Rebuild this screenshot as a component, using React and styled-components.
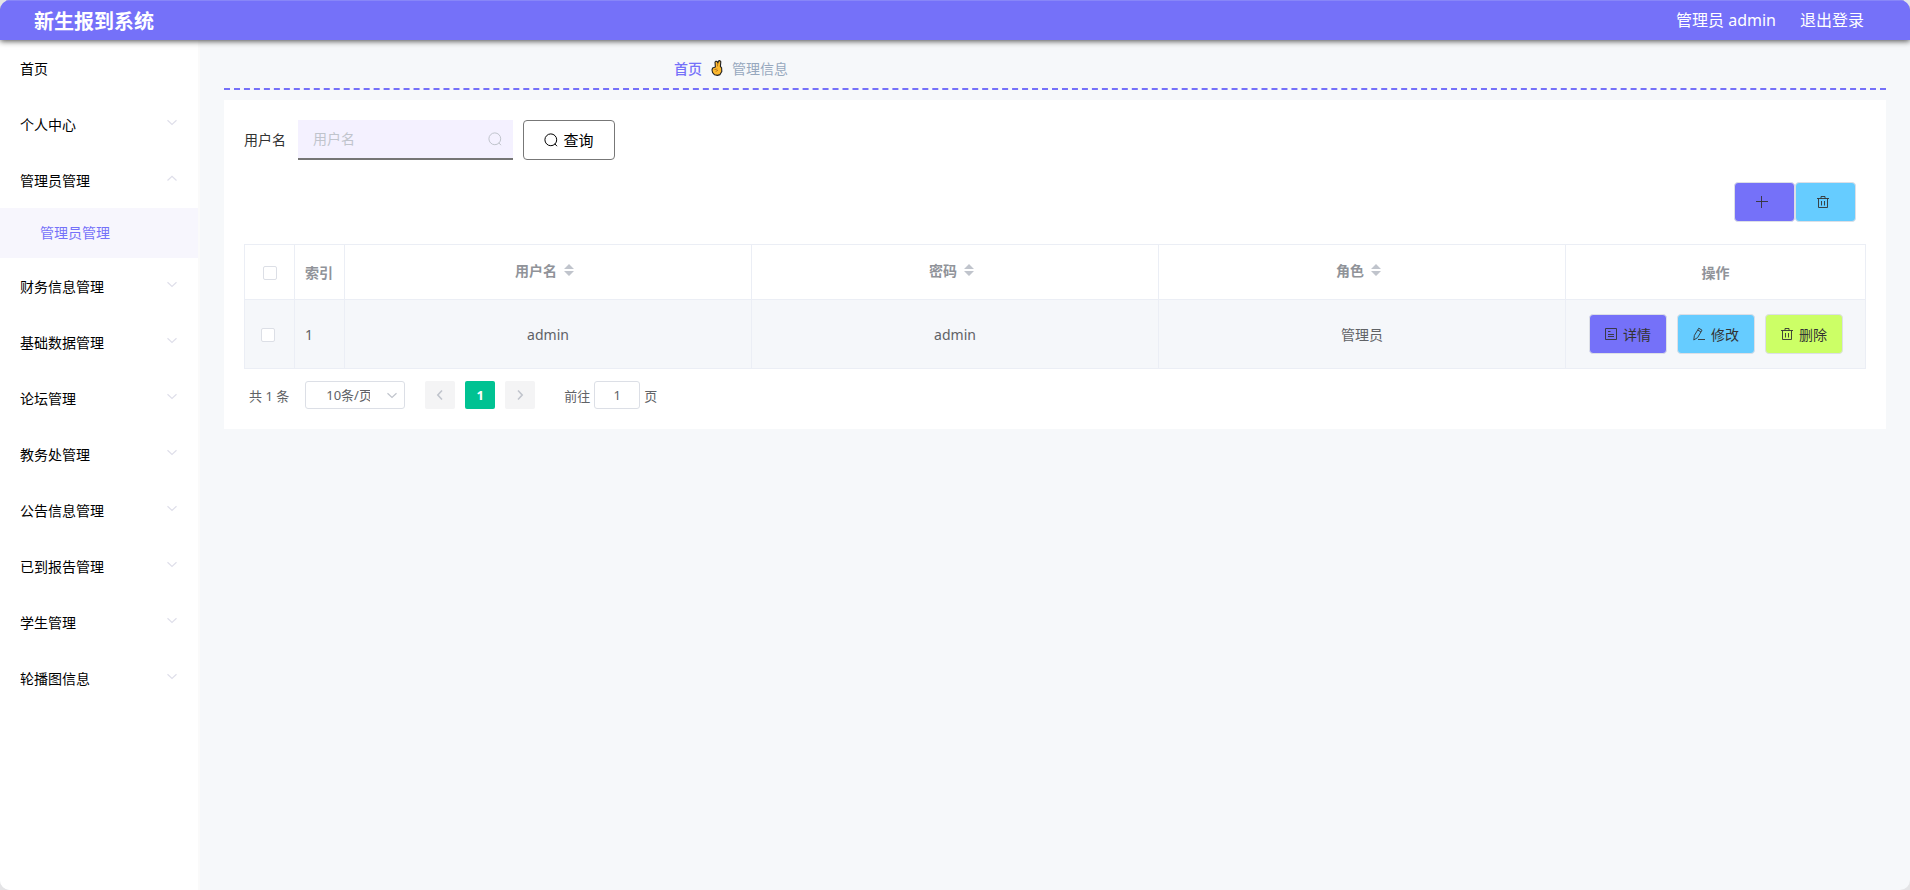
import React, { useState } from 'react';
import styled, { createGlobalStyle, css } from 'styled-components';

const GlobalStyle = createGlobalStyle`
  * {
    box-sizing: border-box;
  }

  body {
    margin: 0;
    background: #e4e4e6;
    font-family: 'Noto Sans', 'Noto Sans CJK SC', sans-serif;
    font-size: 14px;
    color: #606266;
  }

  button, input, select {
    font-family: inherit;
    font-size: 14px;
  }
`;

const Page = styled.div`
  display: flex;
  flex-direction: column;
  min-height: 100vh;
  border-radius: 10px;
  overflow: hidden;
  background: #f6f8fa;
`;

const Header = styled.header`
  position: relative;
  display: flex;
  align-items: center;
  justify-content: space-between;
  height: 40px;
  padding: 0 46px 0 34px;
  background: #7571f9;
  border-top: 1px solid #8886f8;
  box-shadow: 0 1px 6px #444;
  color: #fff;
`;

const Title = styled.h1`
  margin: 0;
  padding-top: 2px;
  font-size: 20px;
  line-height: 40px;
  font-weight: 700;
`;

const UserBar = styled.div`
  display: flex;
  gap: 24px;
  padding-bottom: 3px;
  font-size: 16px;
`;

const HeaderLink = styled.a`
  color: #fff;
  text-decoration: none;
`;

const Body = styled.div`
  display: flex;
  flex: 1;
`;

const Sidebar = styled.nav`
  flex: 0 0 200px;
  background: #fff;
  border-right: 2px solid #fafafa;
`;

const MenuItem = styled.a`
  display: flex;
  align-items: center;
  justify-content: space-between;
  height: 56px;
  padding: 0 19px 0 20px;
  color: #000;
  text-decoration: none;

  svg {
    margin-bottom: 4px;
    color: #dfdfea;
  }
`;

const SubMenuItem = styled.a`
  display: flex;
  align-items: center;
  height: 50px;
  padding: 0 40px 2px;
  background: #f7f6fd;
  color: #7571f9;
  text-decoration: none;
`;

const Main = styled.main`
  flex: 1;
  min-width: 0;
  padding: 10px 24px;
`;

const Breadcrumb = styled.nav`
  display: flex;
  align-items: center;
  gap: 9px;
  height: 40px;
  margin-bottom: 10px;
  padding: 0 0 2px 450px;
  border-bottom: 2px dashed #7571f9;
  color: #97a8be;
`;

const BreadcrumbLink = styled.a`
  color: #7571f9;
  font-weight: 500;
  text-decoration: none;
`;

const Card = styled.section`
  padding: 20px;
  background: #fff;
`;

const SearchForm = styled.form`
  display: flex;
  align-items: center;
  gap: 10px;
  margin-bottom: 22px;
`;

const Label = styled.label`
  margin-right: 2px;
  padding-bottom: 2px;
  color: #333;
`;

const SearchBox = styled.div`
  display: flex;
  align-items: center;
  width: 215px;
  height: 40px;
  padding: 0 11px 0 15px;
  background: #f4f1ff;
  border-bottom: 2px solid #757575;
  color: #c0c4cc;
`;

const SearchInput = styled.input`
  flex: 1;
  min-width: 0;
  padding: 0 0 2px;
  border: 0;
  outline: none;
  background: transparent;
  color: #606266;

  &::placeholder {
    color: #c0c4cc;
  }
`;

const QueryButton = styled.button`
  display: flex;
  align-items: center;
  justify-content: center;
  gap: 5px;
  width: 92px;
  height: 40px;
  padding: 0 0 1px;
  background: #fff;
  border: 1px solid #777;
  border-radius: 4px;
  color: #000;
  font-size: 15px;
`;

const Toolbar = styled.div`
  display: flex;
  justify-content: flex-end;
  margin-bottom: 22px;
  padding-right: 10px;
`;

const colors = {
  violet: '#7571f9',
  blue: '#66ccff',
  green: '#ccff66',
};

const ActionButton = styled.button`
  display: flex;
  align-items: center;
  justify-content: center;
  gap: 5px;
  height: 40px;
  min-width: 78px;
  padding: 0 14px;
  background: ${({ $tone }) => colors[$tone]};
  border: 1px solid #dcdfe6;
  border-radius: 4px;
  color: #333;

  ${({ $iconOnly }) => $iconOnly && css`
    min-width: 61px;
    padding: 0 25px 0 20px;
  `}
`;

const Table = styled.table`
  width: 100%;
  table-layout: fixed;
  border-collapse: collapse;
`;

const Col = styled.col`
  width: ${({ $width }) => ($width ? `${$width}px` : 'auto')};
`;

const Th = styled.th`
  height: 55px;
  padding: 0 10px;
  border: 1px solid #ebeef5;
  color: #909399;
  font-weight: 700;
  text-align: ${({ $align }) => $align || 'center'};
`;

const Td = styled.td`
  height: 69px;
  padding: 0 10px;
  border: 1px solid #ebeef5;
  background: #f5f7fa;
  text-align: ${({ $align }) => $align || 'center'};
`;

const SortLabel = styled.span`
  display: flex;
  align-items: center;
  justify-content: center;
  gap: 7px;
  padding: 0 7px 4px 0;
`;

const Checkbox = styled.input.attrs({ type: 'checkbox' })`
  appearance: none;
  display: block;
  width: 14px;
  height: 14px;
  margin: 2px auto 0;
  background: #fff;
  border: 1px solid #dcdfe6;
  border-radius: 2px;

  &:checked {
    background: #7571f9;
  }

  td & {
    margin: 2px 6px 0;
  }
`;

const RowActions = styled.div`
  display: flex;
  justify-content: center;
  gap: 10px;
`;

const Pagination = styled.div`
  display: flex;
  align-items: center;
  gap: 10px;
  padding: 12px 5px 0;
  font-size: 13px;
`;

const PageSize = styled.div`
  display: grid;
  align-items: center;
  width: 100px;
  height: 28px;
  margin: 0 10px 0 6px;
  border: 1px solid #dcdfe6;
  border-radius: 3px;

  select, svg {
    grid-area: 1 / 1;
  }

  select {
    width: 100%;
    height: 26px;
    padding: 0 34px 0 20px;
    appearance: none;
    border: 0;
    background: transparent;
    color: #606266;
    font-size: 13px;
    text-align: center;
  }

  svg {
    justify-self: end;
    margin-right: 5px;
    color: #c0c4cc;
    pointer-events: none;
  }
`;

const PageButton = styled.button`
  display: flex;
  align-items: center;
  justify-content: center;
  width: 30px;
  height: 28px;
  padding: 0;
  border: 0;
  border-radius: 2px;
  background: ${({ $active }) => ($active ? '#00c292' : '#f4f4f5')};
  color: ${({ $active }) => ($active ? '#fff' : '#c0c4cc')};
  font-size: 13px;
  font-weight: 700;
`;

const Jumper = styled.label`
  display: flex;
  align-items: center;
  gap: 4px;
  margin-left: 19px;

  input {
    width: 46px;
    height: 28px;
    padding: 0;
    border: 1px solid #dcdfe6;
    border-radius: 3px;
    color: #606266;
    font-size: 13px;
    text-align: center;
  }
`;

const Svg = ({ size = 14, children, ...rest }) => (
  <svg width={size} height={size} viewBox="0 0 14 14" fill="none" stroke="currentColor" {...rest}>
    {children}
  </svg>
);

const ChevronIcon = ({ up }) => (
  <Svg strokeWidth="1.2">
    <path d={up ? 'M2.5 9.5 7 5.3 11.5 9.5' : 'M2.5 5.2 7 9.4 11.5 5.2'} />
  </Svg>
);

const ArrowIcon = ({ left }) => (
  <Svg strokeWidth="1.6">
    <path d={left ? 'M9 2.5 4.8 7 9 11.5' : 'M5 2.5 9.2 7 5 11.5'} />
  </Svg>
);

const SearchIcon = ({ size }) => (
  <Svg size={size}>
    <circle cx="6.8" cy="6.8" r="5.9" />
    <path d="M10.8 10.8 13 13.2" />
  </Svg>
);

const PlusIcon = () => (
  <Svg strokeWidth=".9">
    <path d="M1 6.5h12M6.5 1v12" />
  </Svg>
);

const TrashIcon = () => (
  <Svg strokeWidth=".9">
    <path d="M1 3.5h12M2.5 3.5v9h9v-9M5 3.5v-2h4v2M5.5 6v4.5M8.5 6v4.5" />
  </Svg>
);

const DetailIcon = () => (
  <Svg strokeWidth=".9">
    <path d="M1.5 1.5h11v11h-11zM4 4.5h2.5M4 7.5h6M4 9.5h6" />
  </Svg>
);

const EditIcon = () => (
  <Svg strokeWidth=".9">
    <path d="M2.4 8.4 6.8 1.2 10 3.2 5.6 10.6 1.8 13zM5.8 3 9 5M6 12.5h7" />
  </Svg>
);

const SortIcon = () => (
  <svg width="10" height="12" viewBox="0 0 10 12" fill="#c0c4cc">
    <path d="M0 5 5 0l5 5zM0 7h10l-5 5z" />
  </svg>
);

// crossed fingers between the breadcrumb entries
const HandIcon = () => (
  <svg width="12" height="16" viewBox="0 0 12 16">
    <path
      d="M1 10 1.6 8 4.4 7 4 2.2 5 1.2 6.2 1.6 6.8 3 7.6 .9 8.8 .6 9.8 1.6 9.4 6.4 10.6 7.8 10.8 11.4 9 14.6 6.4 15.4 3.6 14.8 1.6 12.6z"
      fill="#fdb92e"
      stroke="#222"
      strokeWidth="1.1"
      strokeLinejoin="round"
    />
    <path d="M6.8 3 6.4 6.4M3.4 9.6l3-.6M4.6 11.6l2.4-1.4" fill="none" stroke="#a86a18" strokeWidth=".8" />
  </svg>
);

const menus = [
  { name: '首页', leaf: true },
  { name: '个人中心' },
  { name: '管理员管理', children: ['管理员管理'] },
  { name: '财务信息管理' },
  { name: '基础数据管理' },
  { name: '论坛管理' },
  { name: '教务处管理' },
  { name: '公告信息管理' },
  { name: '已到报告管理' },
  { name: '学生管理' },
  { name: '轮播图信息' },
];

const columns = ['用户名', '密码', '角色'];

const rows = [{ id: 1, username: 'admin', password: 'admin', role: '管理员' }];

const App = () => {
  const [username, setUsername] = useState('');
  const [page, setPage] = useState('1');

  return (
    <Page>
      <GlobalStyle />
      <Header>
        <Title>新生报到系统</Title>
        <UserBar>
          <span>管理员 admin</span>
          <HeaderLink href="#logout">退出登录</HeaderLink>
        </UserBar>
      </Header>

      <Body>
        <Sidebar>
          {menus.map((menu) => (
            <React.Fragment key={menu.name}>
              <MenuItem href="#menu">
                {menu.name}
                {!menu.leaf && <ChevronIcon up={Boolean(menu.children)} />}
              </MenuItem>
              {menu.children?.map((child) => (
                <SubMenuItem href="#submenu" key={child}>{child}</SubMenuItem>
              ))}
            </React.Fragment>
          ))}
        </Sidebar>

        <Main>
          <Breadcrumb>
            <BreadcrumbLink href="#home">首页</BreadcrumbLink>
            <HandIcon />
            <span>管理信息</span>
          </Breadcrumb>

          <Card>
            <SearchForm onSubmit={(e) => e.preventDefault()}>
              <Label htmlFor="username">用户名</Label>
              <SearchBox>
                <SearchInput
                  id="username"
                  placeholder="用户名"
                  value={username}
                  onChange={(e) => setUsername(e.target.value)}
                />
                <SearchIcon />
              </SearchBox>
              <QueryButton type="submit"><SearchIcon /> 查询</QueryButton>
            </SearchForm>

            <Toolbar>
              <ActionButton $tone="violet" $iconOnly aria-label="新增"><PlusIcon /></ActionButton>
              <ActionButton $tone="blue" $iconOnly aria-label="删除"><TrashIcon /></ActionButton>
            </Toolbar>

            <Table>
              <colgroup>
                <Col $width={50} />
                <Col $width={50} />
                <Col />
                <Col />
                <Col />
                <Col $width={300} />
              </colgroup>
              <thead>
                <tr>
                  <Th><Checkbox aria-label="全选" /></Th>
                  <Th $align="left">索引</Th>
                  {columns.map((column) => (
                    <Th key={column}>
                      <SortLabel>{column} <SortIcon /></SortLabel>
                    </Th>
                  ))}
                  <Th>操作</Th>
                </tr>
              </thead>
              <tbody>
                {rows.map((row) => (
                  <tr key={row.id}>
                    <Td><Checkbox aria-label="选择" /></Td>
                    <Td $align="left">{row.id}</Td>
                    <Td>{row.username}</Td>
                    <Td>{row.password}</Td>
                    <Td>{row.role}</Td>
                    <Td>
                      <RowActions>
                        <ActionButton $tone="violet"><DetailIcon /> 详情</ActionButton>
                        <ActionButton $tone="blue"><EditIcon /> 修改</ActionButton>
                        <ActionButton $tone="green"><TrashIcon /> 删除</ActionButton>
                      </RowActions>
                    </Td>
                  </tr>
                ))}
              </tbody>
            </Table>

            <Pagination>
              <span>共 1 条</span>
              <PageSize>
                <select aria-label="每页条数">
                  <option>10条/页</option>
                  <option>20条/页</option>
                </select>
                <ChevronIcon />
              </PageSize>
              <PageButton disabled aria-label="上一页"><ArrowIcon left /></PageButton>
              <PageButton $active>1</PageButton>
              <PageButton disabled aria-label="下一页"><ArrowIcon /></PageButton>
              <Jumper>
                前往
                <input value={page} onChange={(e) => setPage(e.target.value)} />
                页
              </Jumper>
            </Pagination>
          </Card>
        </Main>
      </Body>
    </Page>
  );
};

export default App;
